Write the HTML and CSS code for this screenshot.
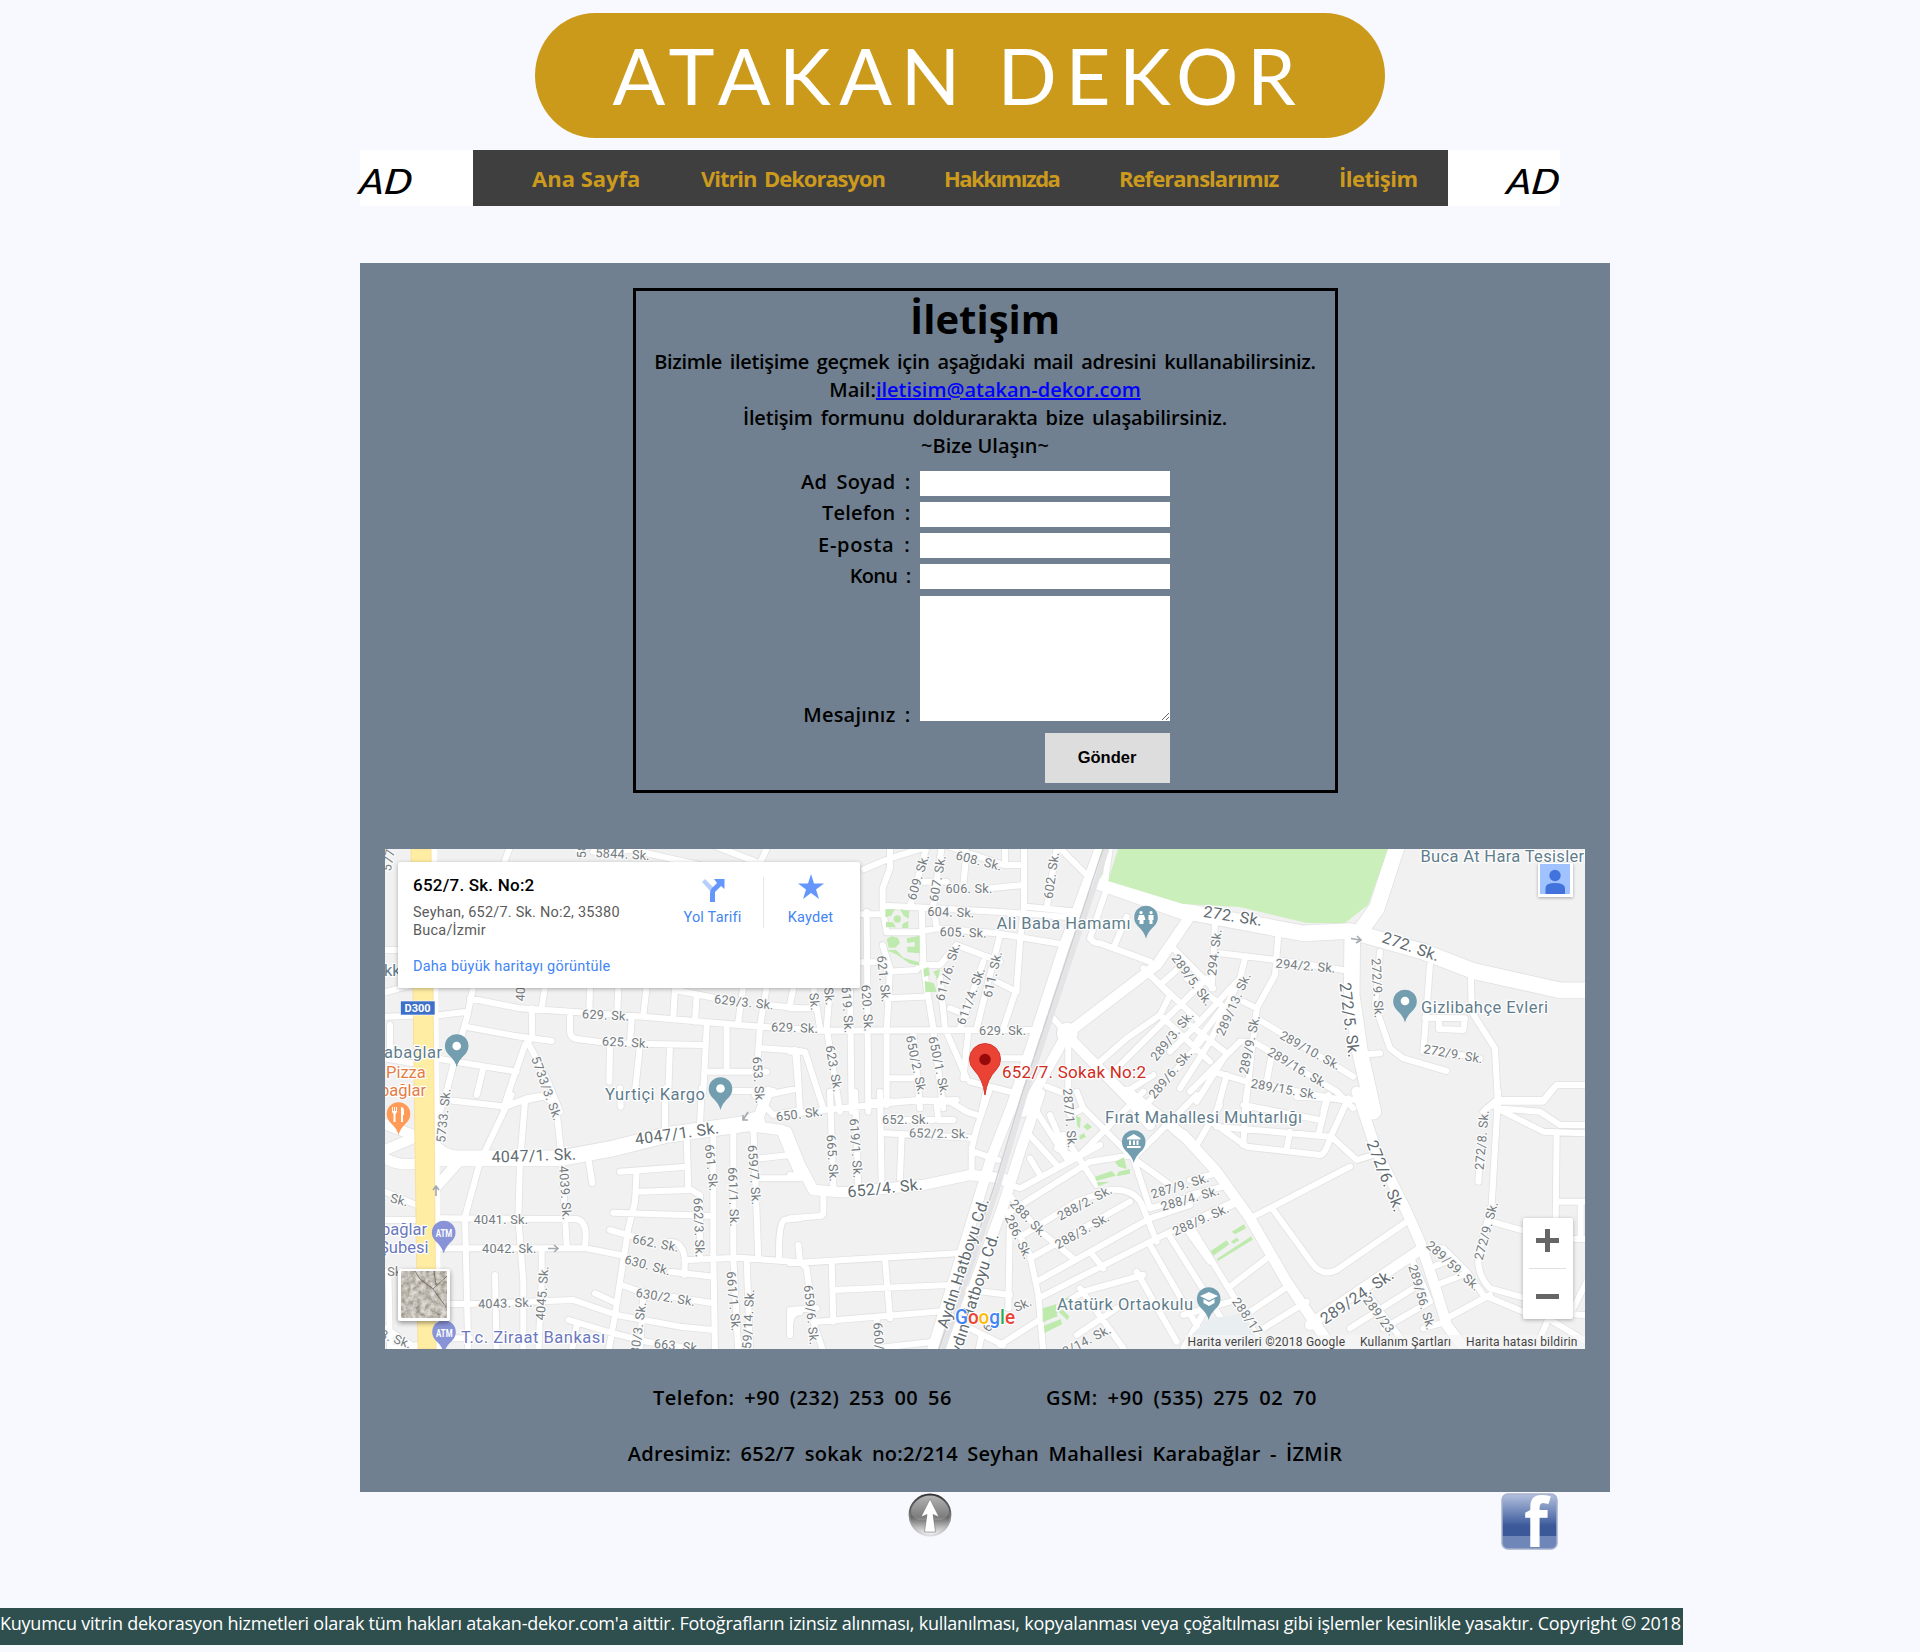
FILE: index.html
```html
<!DOCTYPE html>
<html lang="tr">
<head>
<meta charset="utf-8">
<title>İletişim - Atakan Dekor</title>
<link rel="stylesheet" href="styles.css">
</head>
<body>
<header class="banner"><h1 class="brand">ATAKAN DEKOR</h1></header>

<div class="topbar">
  <div class="mono"><span>AD</span></div>
  <nav class="menu">
    <a class="nav-home">Ana Sayfa</a>
    <a class="nav-decor">Vitrin Dekorasyon</a>
    <a class="nav-about">Hakkımızda</a>
    <a class="nav-refs">Referanslarımız</a>
    <a class="nav-contact">İletişim</a>
  </nav>
  <div class="mono mono-right"><span>AD</span></div>
</div>

<main class="content">
  <section class="contact">
    <h2 class="title">İletişim</h2>
    <p class="line intro">Bizimle iletişime geçmek için aşağıdaki mail adresini kullanabilirsiniz.</p>
    <p class="line mail">Mail:<a href="mailto:iletisim@atakan-dekor.com">iletisim@atakan-dekor.com</a></p>
    <p class="line hint">İletişim formunu doldurarakta bize ulaşabilirsiniz.</p>
    <p class="line reach">~Bize Ulaşın~</p>
    <form class="form">
      <label for="ad">Ad Soyad :</label><input id="ad" type="text">
      <label for="tel">Telefon :</label><input id="tel" type="text">
      <label for="mail" class="wide">E-posta :</label><input id="mail" type="text">
      <label for="konu" class="tight">Konu :</label><input id="konu" type="text">
      <label for="mesaj" class="last">Mesajınız :</label><textarea id="mesaj"></textarea>
      <button type="button">Gönder</button>
    </form>
  </section>

  <section class="map">
    <svg class="canvas" viewBox="385 849 1200 500" width="1200" height="500">
      <defs>
        <g id="roads">
          <g transform="translate(380 845) scale(.33333)">
            <path class="r" d="M392 0L370 60M155 0V60M620 0L600 30M640 20L760 15L890 45L960 60M1010 5L1140 55L1165 0M15 315H60M15 442L95 420M15 515L100 512M165 512L262 500M270 460L420 490L790 515L1140 545L1260 553M280 425L260 520L225 640L205 720L180 800M255 545L400 572L515 588M455 490L457 575L435 600L400 700L370 790M445 595L500 700L540 800M495 425L485 490M630 425L628 500M715 425L712 500M800 425L790 510M885 425L880 515M950 450L945 530M885 435L1020 462M1090 425L1075 530M1160 425L1140 545L1130 690M1160 480L1260 490M1240 430L1230 480M570 515V560Q572 580 590 582L690 595L970 600M690 600L688 710M780 600L765 740M870 600L865 740M980 545L970 740M755 520L750 590M1040 545V680M975 680H1160M1150 610L1260 618M1245 615L1255 730L1160 750M165 640L300 662L410 680M310 670L290 750M375 780L490 755L530 780M15 640L100 655M30 540V620M1060 738H1180"/>
          </g>
          <g transform="translate(380 1095) scale(.33333)">
            <path class="b" d="M165 190H540L700 160L860 120L1130 82"/>
            <path class="m" d="M165 150Q200 190 290 190M165 280L245 190M15 190Q60 215 110 205M15 165L110 125M15 88L100 120M1130 82L1165 -10M1125 95L1205 105L1235 180L1262 240"/>
            <path class="r" d="M395 0L300 200L255 365M200 15L380 35L440 10L500 0M435 20L420 200L415 370L430 560V770M530 50L545 190L560 450M625 190L637 265M165 370L590 372Q625 380 615 450M165 460H620L720 480M255 365L265 770M345 540L350 770M485 460V560L475 770M200 627H265L580 615L710 660L900 695L1000 705M645 595L710 625M565 675L700 715L800 740L930 760M590 690L575 770M720 230L920 215M770 230L765 320L745 400L720 560L705 660L685 770M780 290L925 285M920 130L925 280L960 300V480M700 353L1000 363M690 405L760 425M1000 120V480L1005 770M1060 105V490L1075 770M1120 95L1135 490M1100 490L1110 770M920 495L1075 488L1260 502M870 530L1000 545M870 440Q925 440 912 540M725 570L780 590L1000 625M790 590L780 770M1260 370L1215 374Q1195 380 1197 490M1260 652Q1225 650 1230 720M1140 250H1260M1140 190L1230 180M720 -20L722 35M855 -20V100M965 -20L960 90M1125 1L1180 60L1260 45M15 290L110 330M15 375H110M15 530H60M25 530L30 760L120 750M165 730H270M15 700L110 760"/>
            <circle class="r" cx="1125" cy="82" r="22"/>
          </g>
          <g transform="translate(790 845) scale(.33333)">
            <path class="b" d="M910 105L1200 207"/>
            <path class="m" d="M1205 207L1100 360L832 565L700 800M932 5L820 310L660 800M840 580L1020 765L1080 840"/>
            <path class="r" d="M222 73L300 40L412 5M300 0V70L278 130V200M215 208H280M280 182L380 187L620 200L860 218M410 5L360 185M455 5L430 180L440 250M530 20L520 120M702 0V190L690 290L680 430L640 550M480 5L640 60H700M645 0V60M390 110H470M600 130L700 120M380 262L440 250L620 265L830 300M800 10L770 190M710 185L860 200M810 10L890 90M278 190L290 262L380 262M395 190L400 350L380 375L290 380M400 360H450L500 300L630 350M290 460L400 455M278 300L300 370L290 560M215 352H270M400 350L410 430L430 550M450 400L465 550L530 700M0 490H80M0 552L80 557L750 555M580 350L510 550M630 270L560 550M620 410L680 440M480 490L530 510M70 425L90 550M120 425L110 550L150 800M180 425L185 800M230 200L235 800M290 560V780M0 620H45L100 790M20 620L30 800M370 560L390 790M430 560L460 790M300 700H390M240 772L500 765M535 560L520 700M540 710L680 745M630 640H730M588 740L575 800M960 5L945 110M950 130L900 280Q910 295 930 295L1080 350M1010 215L970 310M1060 370L1140 450L1110 510L1010 580L930 650M1150 310L1270 430M1110 510L1260 650M1110 420L1160 375M1080 390L1230 530M835 590V800M960 690L1250 400M1240 580L1060 790M770 725L835 750M780 510L830 565M1010 740L1090 690"/>
            <circle class="m" cx="832" cy="565" r="16"/>
          </g>
          <g transform="translate(1190 845) scale(.33333)">
            <path class="b" d="M-10 200L150 230L340 265L480 258L700 320L850 378L1110 436H1190M622 0L560 190L510 260M487 260L485 450L510 620L550 800"/>
            <path class="r" d="M75 235L65 430M90 325L260 345L460 375M265 270L255 390L200 490L165 800M165 340L150 400L60 590L-30 730M40 570L110 625M-10 400L100 485L20 590M200 520L490 695M150 590H190L440 740L490 790M110 625L20 770M70 680L170 710L480 770M245 630L230 710M0 740L150 590M150 400L20 540L-60 620M110 690L80 800M40 570L0 540M160 470L200 490M570 320L555 480L600 610L640 640L770 678M500 630L570 625M720 360L700 620M705 518L825 520L820 555L747 552V520M700 610L870 640M842 360L845 500L915 610L925 800M890 790L925 770H1060L1100 720H1190M410 760L400 800"/>
          </g>
          <g transform="translate(790 1095) scale(.33333)">
            <path class="m" d="M-10 110L30 210L70 285L160 292L400 270L540 240L640 250M680 -5L600 200L560 330L425 770M750 -5L690 170L640 330L480 770M1010 -10L1130 80L1200 140"/>
            <path class="r" d="M640 262L690 280L930 150M0 240L45 245M100 290V350Q100 362 90 363L0 370M120 -10L130 280M195 -10L205 280M270 -10L275 270M-20 60L100 45L250 30L380 15L480 20L530 50L560 60M597 -10L560 100L545 160V240M550 170L625 195M440 25L445 75H490M290 75H430M285 115L540 128M335 120L330 250M0 505L500 475M25 450L30 500L50 520L70 680L100 770M125 500L130 680M285 490L300 670M130 585L480 570M80 680L500 645M0 720V645L80 640M260 670V760L430 740M500 580L660 600M660 350L655 640M650 350L720 480L745 600L760 770M650 290L740 400L850 490M700 420L860 320L960 285Q1040 280 1060 340L1100 440M720 490L1020 320M740 560L1080 370L1200 330M660 350L900 200L1030 180M745 610L1100 430L1330 320M630 750L880 590L1060 540M720 190L750 240M710 110L800 210M740 50L830 190M780 60L830 180M820 120L920 270M860 -10L880 40L930 90L1030 190L1140 270M800 160L860 190L1060 -10M880 40L840 60M1030 190L1080 340L1220 300M1080 450L1260 760M1140 425L1300 680M900 470L940 520M1040 530L1160 740M870 580L1000 760M540 700L640 750M575 720L565 770M1030 190L1220 0M1180 760L1260 620M1180 390L1260 500M860 720L980 640"/>
          </g>
          <g transform="translate(1190 1095) scale(.33333)">
            <path class="m" d="M-20 120L80 230L180 370L290 560L420 750M500 -10L560 170L650 350L690 440L740 590L770 690L830 770M690 465L400 660L360 690"/>
            <path class="r" d="M480 215L190 365M250 345L370 510Q400 545 440 525L650 380M0 255L80 235M0 300L110 272M0 385L140 325M0 390L140 620L210 740M120 575L230 490M-20 660L120 620M180 650L300 570M220 700L350 620M170 -10L160 150M40 70L80 90L170 155L390 180Q405 180 420 130L475 10M160 30L390 75M80 95L420 125M300 110L290 160M415 0L385 120M320 5L510 15M430 130L500 195L550 180M20 150L90 30M690 460H760L830 530L880 600L1000 650L1190 660M660 480L720 620M720 520L780 495M740 570L830 535M770 670L900 600M480 700L670 580M580 700L720 620M520 580L640 740M700 700L770 680M925 -10L905 330L865 480Q860 540 900 580L1010 610M870 190L865 260M905 380L1010 410M880 50L920 15H1060L1090 -20M920 40L1050 50L1110 90H1190M940 50L1060 110L1190 115M1100 120L1097 380M1105 320H1190M1172 320V432M1140 432H1190M1190 560L1145 650M1080 660L1050 730M1090 680L1190 740"/>
          </g>
        </g>
        <g id="pin"><path d="M0 21Q-1.500 14.500 -8.500 8.200A11.800 11.800 0 1 1 8.500 8.200Q1.500 14.500 0 21Z"/></g>
      </defs>
      <rect x="385" y="849" width="1200" height="500" fill="#f1f1f1"/>
      <use href="#roads" class="casing"/>
      <use href="#roads" class="surface"/>
      <path fill="#caefbb" d="M1118 849H1388L1368 905L1345 923L1307 923L1240 907L1183 904L1108 881ZM1103 849H1108L1101 878L1096 877Z"/>
      <g fill="#bfeaad" transform="translate(790 845) scale(.33333)">
        <path d="M286 193H315L303 213L286 217ZM330 193L358 198L356 221L342 213ZM288 230L309 232L318 247H288ZM338 236L355 228V249H336ZM290 283L304 274L324 278L330 294L316 308H296ZM350 280L389 272V325L352 322V305H374V290L352 294ZM290 315L318 314L340 338L388 352V362L360 356L322 330ZM400 372L415 366L420 390L402 396ZM430 380L450 372L444 404ZM404 408L432 415L440 440L406 442Z"/>
        <circle cx="322" cy="222" r="11"/>
      </g>
      <g fill="#bfeaad" transform="translate(790 1095) scale(.33333)">
        <path d="M858 62L872 68L870 100L862 94ZM880 95L892 84L906 96L892 106ZM868 122L882 114L888 126L870 134ZM915 245L965 228L978 242L918 258ZM975 200L1002 187L1010 222L985 215ZM985 230L1020 222V236L980 244ZM920 262L960 260L925 274ZM758 640L798 628L802 664L758 682ZM762 692L812 672L816 688L764 714ZM806 650L818 644L838 664L832 676ZM824 612L836 606L840 624Z"/>
        <path d="M1262 468L1310 436L1318 448L1270 482ZM1325 410L1362 388L1368 400L1335 418ZM1280 492L1384 424L1388 434L1284 498ZM1322 440L1340 428L1348 436L1330 446Z"/>
      </g>
      <path fill="#e9eff1" d="M1192 1334L1208 1319L1245 1313L1262 1349H1190Z"/>
      <path class="rail" d="M1107 849L1025 1095L998 1187L943 1349"/>
      <path class="rail-line" d="M1103 849L1021 1097L994 1187L939 1349"/>
      <path fill="#fff" d="M431 849H437L439 1095L441 1349H434Z"/>
      <path fill="#ffeda3" stroke="#f9d98b" stroke-width=".7" d="M411 849H431L433 990L434 1095L436 1349H418L415 1150L413 990Z"/>
      <g stroke="#a4a9ad" stroke-width="1.6" fill="none"><path d="M1351 938.500L1360 940M1357 936L1361 940L1356 943M548 1248.500H557M554 1245L558 1248.500L554 1252M436 1196V1187M433 1190L436 1186L439 1190M748 1112L743 1120M743 1115V1120H748"/></g>

      <g class="st">
        <g transform="translate(380 845) scale(.33333)">
          <text transform="translate(25 45) rotate(-80)">577</text><text transform="translate(606 18) rotate(-90)">58</text><text transform="translate(728 27) rotate(3)">5844. Sk.</text>
          <text transform="translate(421 447) rotate(-88)">40</text><text transform="translate(1092 471) rotate(6)">629/3. Sk.</text><text transform="translate(677 510) rotate(3)">629. Sk.</text><text transform="translate(737 592) rotate(3)">625. Sk.</text><text transform="translate(1244 548) rotate(2)">629. Sk.</text>
          <text transform="translate(500 730) rotate(70)">5733/3. Sk.</text><text transform="translate(1136 706) rotate(86)">653. Sk.</text><text transform="translate(190 811) rotate(-84)">5733. Sk.</text>
        </g>
        <g transform="translate(380 1095) scale(.33333)">
          <text transform="translate(556 294) rotate(86)">4039. Sk.</text><text transform="translate(363 374)">4041. Sk.</text><text transform="translate(388 461)">4042. Sk.</text><text transform="translate(376 624) rotate(-2)">4043. Sk.</text><text transform="translate(486 594) rotate(-86)">4045. Sk.</text>
          <text transform="translate(995 218) rotate(84)">661. Sk.</text><text transform="translate(1061 306) rotate(88)">661/1. Sk.</text><text transform="translate(1123 240) rotate(86)">659/7. Sk.</text><text transform="translate(957 398) rotate(88)">662/3. Sk.</text>
          <text transform="translate(827 444) rotate(11)">662. Sk.</text><text transform="translate(803 510) rotate(15)">630. Sk.</text><text transform="translate(857 606) rotate(9)">630/2. Sk.</text><text transform="translate(773 710) rotate(-82)">630/3. Sk.</text><text transform="translate(892 752) rotate(6)">663. Sk.</text><text transform="translate(1061 619) rotate(85)">661/1. Sk.</text><text transform="translate(1104 683) rotate(-87)">659/14. Sk.</text><text transform="translate(1258 57) rotate(-7)">650. Sk.</text><text transform="translate(48 312) rotate(14)">. Sk.</text><text transform="translate(38 531)">. Sk.</text><text transform="translate(48 732) rotate(20)">3. Sk.</text>
        </g>
        <g transform="translate(790 845) scale(.33333)">
          <text transform="translate(384 96) rotate(-73)">609. Sk.</text><text transform="translate(442 100) rotate(-80)">607. Sk.</text><text transform="translate(567 47) rotate(14)">608. Sk.</text><text transform="translate(537 131)">606. Sk.</text><text transform="translate(483 201) rotate(2)">604. Sk.</text><text transform="translate(520 262) rotate(2)">605. Sk.</text><text transform="translate(784 91) rotate(-82)">602. Sk.</text>
          <text transform="translate(282 402) rotate(84)">621. Sk.</text><text transform="translate(473 380) rotate(-74)">611/6. Sk.</text><text transform="translate(542 453) rotate(-70)">611/4. Sk.</text><text transform="translate(607 388) rotate(-77)">611. Sk.</text><text transform="translate(74 470) rotate(84)">Sk.</text><text transform="translate(118 454) rotate(84)">Sk.</text><text transform="translate(173 494) rotate(86)">619. Sk.</text><text transform="translate(232 490) rotate(86)">620. Sk.</text><text transform="translate(638 557)">629. Sk.</text>
          <text transform="translate(132 671) rotate(80)">623. Sk.</text><text transform="translate(379 660) rotate(78)">650/2. Sk.</text><text transform="translate(447 663) rotate(78)">650/1. Sk.</text><text transform="translate(1207 405) rotate(54)">289/5. Sk.</text><text transform="translate(1146 572) rotate(-51)">289/3. Sk.</text><text transform="translate(1141 686) rotate(-50)">289/6. Sk.</text><text transform="translate(840 820) rotate(85)">287/1. Sk.</text>
        </g>
        <g transform="translate(1190 845) scale(.33333)">
          <text transform="translate(73 322) rotate(-83)">294. Sk.</text><text transform="translate(347 362) rotate(5)">294/2. Sk.</text><text transform="translate(130 477) rotate(-66)">289/13. Sk.</text><text transform="translate(178 598) rotate(-78)">289/9. Sk.</text><text transform="translate(361 616) rotate(29)">289/10. Sk.</text><text transform="translate(323 668) rotate(31)">289/16. Sk.</text><text transform="translate(283 732) rotate(10)">289/15. Sk.</text><text transform="translate(563 430) rotate(87)">272/9. Sk.</text><text transform="translate(790 626) rotate(10)">272/9. Sk.</text>
        </g>
        <g transform="translate(790 1095) scale(.33333)">
          <text transform="translate(128 190) rotate(86)">665. Sk.</text><text transform="translate(198 160) rotate(86)">619/1. Sk.</text><text transform="translate(347 75)">652. Sk.</text><text transform="translate(447 115) rotate(1)">652/2. Sk.</text><text transform="translate(716 370) rotate(46)">288. Sk.</text><text transform="translate(686 426) rotate(65)">286. Sk.</text><text transform="translate(884 323) rotate(-28)">288/2. Sk.</text><text transform="translate(876 407) rotate(-29)">288/3. Sk.</text><text transform="translate(1170 272) rotate(-17)">287/9. Sk.</text><text transform="translate(1200 310) rotate(-16)">288/4. Sk.</text><text transform="translate(1232 374) rotate(-24)">288/9. Sk.</text><text transform="translate(64 660) rotate(84)">659/6. Sk.</text><text transform="translate(267 740) rotate(86)">660/1.</text><text transform="translate(890 736) rotate(-27)">8/14. Sk.</text><text transform="translate(698 628) rotate(-24)">Sk.</text><text transform="translate(592 697) rotate(-60)">6</text>
        </g>
        <g transform="translate(1190 1095) scale(.33333)">
          <text transform="translate(875 135) rotate(-85)">272/8. Sk.</text><text transform="translate(888 407) rotate(-75)">272/9. Sk.</text><text transform="translate(790 512) rotate(42)">289/59. Sk.</text><text transform="translate(696 607) rotate(74)">289/56. Sk.</text><text transform="translate(570 663) rotate(53)">289/23.</text><text transform="translate(172 664) rotate(55)">288/17</text>
        </g>
      </g>
      <g class="mt">
        <text transform="translate(534 1155.500) rotate(-2)">4047/1. Sk.</text><text transform="translate(677 1133.500) rotate(-8)">4047/1. Sk.</text><text transform="translate(885 1188) rotate(-6)">652/4. Sk.</text>
        <text transform="translate(1233 916) rotate(9)">272. Sk.</text><text transform="translate(1411 946.500) rotate(19)">272. Sk.</text><text transform="translate(1349.500 1020) rotate(83)">272/5. Sk.</text><text transform="translate(1385.500 1176) rotate(68)">272/6. Sk.</text><text transform="translate(1357 1296.500) rotate(-34)">289/24. Sk.</text>
        <text transform="translate(963 1263) rotate(-72)">Aydın Hatboyu Cd.</text><text transform="translate(973 1298) rotate(-72)">Aydın Hatboyu Cd.</text>
      </g>
      <g class="poi" transform="translate(0 5.500)">
        <text x="605" y="1094" textLength="100">Yurtiçi Kargo</text><text x="996.500" y="923" textLength="134">Ali Baba Hamamı</text><text x="1421" y="1007" textLength="127">Gizlibahçe Evleri</text><text x="1420.500" y="856" textLength="168">Buca At Hara Tesisleri</text><text x="1105" y="1117" textLength="197">Fırat Mahallesi Muhtarlığı</text><text x="1057" y="1304" textLength="136">Atatürk Ortaokulu</text><text x="384" y="1052" textLength="58">abağlar</text><text x="384" y="970">kk</text>
        <g class="food"><text x="386" y="1072">Pizza</text><text x="380" y="1090">bağlar</text></g>
        <g class="bank"><text x="381" y="1229.500">bağlar</text><text x="379" y="1247">Şubesi</text><text x="461" y="1337" textLength="144">T.c. Ziraat Bankası</text></g>
        <text class="here" x="1002" y="1072" textLength="144">652/7. Sokak No:2</text>
      </g>
      <g fill="#739eb0">
        <use href="#pin" x="456.700" y="1046"/><use href="#pin" x="720.500" y="1089"/><use href="#pin" x="1146" y="917.500"/><use href="#pin" x="1405" y="1001.500"/><use href="#pin" x="1133.700" y="1142"/><use href="#pin" x="1208.700" y="1299"/>
      </g>
      <use href="#pin" x="398.500" y="1114" fill="#ff9b57"/>
      <g fill="#8994d8"><use href="#pin" x="443.700" y="1232.500"/><use href="#pin" x="444" y="1332"/></g>
      <g fill="#fff">
        <circle cx="456.700" cy="1046" r="4.300"/><circle cx="720.500" cy="1088.500" r="4.300"/><circle cx="1405" cy="1001" r="4.300"/>
        <path d="M1141 911a1.600 1.600 0 1 0 .1 0ZM1139 915H1144L1145.500 920H1143.500V924H1139.500V920H1137.500ZM1151 911a1.600 1.600 0 1 0 .1 0ZM1148.500 915H1153.500V920H1152.500V924H1149.500V920H1148.500Z"/>
        <path d="M1127 1138L1133.700 1134L1140.500 1138V1139.500H1127ZM1129 1140.500H1131V1145H1129ZM1133 1140.500H1135V1145H1133ZM1136.500 1140.500H1138.500V1145H1136.500ZM1127 1146H1140.500V1148H1127Z"/>
        <path d="M1200 1296L1209 1292L1218 1296L1209 1300.500ZM1203.500 1299L1209 1302L1214.500 1299V1303L1209 1306L1203.500 1303Z"/>
        <path d="M392 1107H393V1111H394V1107H395V1111H396V1107H397V1112L395.500 1114V1122H393.500V1114L392 1112ZM401 1107Q404 1107 404 1111V1115H403V1122H401Z"/>
        <text class="atm" x="435.700" y="1237" textLength="16.500" lengthAdjust="spacingAndGlyphs">ATM</text><text class="atm" x="436" y="1336.500" textLength="16.500" lengthAdjust="spacingAndGlyphs">ATM</text>
      </g>
      <path fill="#ea4335" stroke="#d5382c" d="M985 1095Q983 1079 974 1070A15.500 15.500 0 1 1 996 1070Q987 1079 985 1095Z"/><circle cx="985" cy="1059.500" r="5.700" fill="#960a0a"/>
      <rect x="400.500" y="1001" width="34.500" height="14" fill="#3d70c9" stroke="#fff" stroke-width=".6"/><text class="shield" x="404.500" y="1012" textLength="26">D300</text>
      <text class="google" x="955" y="1324" textLength="60" lengthAdjust="spacingAndGlyphs"><tspan fill="#4285f4">G</tspan><tspan fill="#ea4335">o</tspan><tspan fill="#fbbc05">o</tspan><tspan fill="#4285f4">g</tspan><tspan fill="#34a853">l</tspan><tspan fill="#ea4335">e</tspan></text>
      <rect x="1185" y="1335" width="400" height="14" fill="#f5f5f5" opacity=".7"/>
      <g class="legal"><text x="1187.500" y="1346" textLength="157.500">Harita verileri ©2018 Google</text><text x="1360" y="1346" textLength="91">Kullanım Şartları</text><text x="1466" y="1346" textLength="111.500">Harita hatası bildirin</text></g>
    </svg>

    <div class="card">
      <div class="place">
        <strong>652/7. Sk. No:2</strong>
        <span>Seyhan, 652/7. Sk. No:2, 35380<br>Buca/İzmir</span>
        <a>Daha büyük haritayı görüntüle</a>
      </div>
      <div class="action directions">
        <svg width="24" height="24" viewBox="0 0 24 24"><path d="M1 4L4 1L13 10L10 14Z" fill="#b9cffb"/><path d="M9 24V15Q9 12 11 10L16 5L13 1H23.500V11L20 8L14 14V24Z" fill="#6596fb"/></svg>
        Yol Tarifi
      </div>
      <div class="action save">
        <svg width="26" height="26" viewBox="0 0 26 26"><path d="M13 0L16 9.500H26L18 15.500L21 25L13 19L5 25L8 15.500L0 9.500H10Z" fill="#6596fb"/></svg>
        Kaydet
      </div>
    </div>
    <div class="user"><svg width="30" height="30" viewBox="0 0 30 30"><rect width="30" height="30" fill="#a0c3ff"/><circle cx="15" cy="11.500" r="5.700" fill="#4272db"/><path d="M5.500 30V24Q5.500 19 15 19T25 24V30Z" fill="#4272db"/></svg></div>
    <div class="zoom"><svg width="50" height="101" viewBox="0 0 50 101"><path d="M13 22.500H36M24.500 11V34M13 78.500H36" stroke="#666" stroke-width="5"/><path d="M6 50.500H43" stroke="#e0e0e0"/></svg></div>
    <div class="satellite"><svg width="46" height="47" viewBox="0 0 46 47">
      <filter id="terrain" x="0" y="0" width="1" height="1"><feTurbulence type="fractalNoise" baseFrequency=".2" numOctaves="3" seed="4"/><feColorMatrix values=".7 .35 0 0 .02 .7 .35 0 0 -.01 .7 .35 0 0 -.06 0 0 0 0 1"/></filter>
      <rect width="46" height="47" filter="url(#terrain)"/><path d="M14 0L19 8L32 18L46 5M32 18L45 36M35 14L33 0" stroke="#5d5148" fill="none" opacity=".65"/></svg></div>
  </section>

  <section class="numbers">
    <p class="line phones"><span class="phone">Telefon: +90 (232) 253 00 56</span><span class="gsm">GSM: +90 (535) 275 02 70</span></p>
    <p class="line address">Adresimiz: 652/7 sokak no:2/214 Seyhan Mahallesi Karabağlar - İZMİR</p>
  </section>
</main>

<div class="links">
  <svg width="44" height="44" viewBox="0 0 44 44">
    <defs><linearGradient id="ball" x2="0" y2="1"><stop stop-color="#aaa"/><stop offset=".55" stop-color="#666"/><stop offset=".8" stop-color="#bbb"/><stop offset="1" stop-color="#f8f8ff"/></linearGradient>
    <linearGradient id="rim" x2="0" y2="1"><stop stop-color="#111"/><stop offset=".5" stop-color="#777"/><stop offset="1" stop-color="#ddd"/></linearGradient></defs>
    <circle cx="22" cy="22" r="20.500" fill="url(#ball)" stroke="url(#rim)" stroke-width="1.800"/>
    <path d="M3 17A19 19 0 0 1 41 17Q41 25 33 27H11Q3 25 3 17Z" fill="#fff" opacity=".15"/>
    <path d="M22 6L31 24L25 21.500L27.500 39H16.500L19 21.500L13 24Z" fill="#fff" stroke="#666" stroke-width=".5"/>
  </svg>
  <svg class="fb" width="57" height="57" viewBox="0 0 57 57">
    <defs><linearGradient id="fbg" x2="0" y2="1"><stop stop-color="#b4c1de"/><stop offset=".5" stop-color="#4c68a5"/><stop offset=".58" stop-color="#3b5998"/><stop offset=".76" stop-color="#3b5998"/><stop offset=".77" stop-color="#6f87b8"/><stop offset="1" stop-color="#6f87b8"/></linearGradient></defs>
    <rect x="1" y="1" width="55" height="55" rx="6" fill="url(#fbg)" stroke="#a5b0cc" stroke-width="1.500"/>
    <text x="23" y="54" class="fb-letter" textLength="24" lengthAdjust="spacingAndGlyphs">f</text>
  </svg>
</div>

<footer class="footer">Kuyumcu vitrin dekorasyon hizmetleri olarak tüm hakları atakan-dekor.com'a aittir. Fotoğrafların izinsiz alınması, kullanılması, kopyalanması veya çoğaltılması gibi işlemler kesinlikle yasaktır. Copyright © 2018</footer>
</body>
</html>
```
FILE: styles.css
```css
* { box-sizing: border-box; }
body {
  margin: 0;
  height: 1652px;
  background: #f8f8ff;
  color: #000;
  font-family: "Comic Sans MS", "Open Sans", sans-serif;
  font-size: 20px;
  font-weight: 600;
  overflow: hidden;
}
p, h1, h2 { margin: 0; }

.banner { width: 850px; height: 125px; margin: 13px auto 12px; border-radius: 60px / 62.5px; background: #cc9a1b; text-align: center; }
.brand { color: #fff; font: 400 78px/125px Lato, sans-serif; letter-spacing: 8.6px; padding-right: 3px; white-space: nowrap; }

.topbar { width: 1200px; height: 56px; margin: 0 auto; display: flex; background: #fff; }
.mono { width: 113px; font: italic 500 35px/60px Lato, sans-serif; }
.mono span { display: inline-block; transform: skewX(-8deg) scaleX(1.12); transform-origin: left; }
.mono-right { width: 112px; text-align: right; }
.mono-right span { transform-origin: right; }
.menu { width: 975px; display: flex; gap: 60px; padding-left: 59px; background: #3f3f3f; color: #cc9a1c; font-size: 22px; line-height: 57px; font-weight: 700; white-space: nowrap; }
.nav-home { width: 109px; }
.nav-decor { width: 183px; letter-spacing: -1.05px; word-spacing: 3px; }
.nav-about { width: 115px; letter-spacing: -1.5px; }
.nav-refs { width: 160px; letter-spacing: -.95px; }
.nav-contact { letter-spacing: -.5px; }

.content { width: 1250px; height: 1229px; margin: 57px 0 0 360px; padding: 25px; background: #708090; }
.contact { width: 705px; height: 505px; margin: 0 auto 56px; border: 3px solid #000; text-align: center; }
.title { font-size: 40px; line-height: 56px; font-weight: 700; padding-bottom: 1px; }
.line { line-height: 28px; white-space: nowrap; text-align: center; }
.intro { letter-spacing: -.34px; word-spacing: 3px; }
.hint { letter-spacing: -.17px; word-spacing: 3px; }
.contact a { color: #00f; }

.form { margin: 11px 0 0 0; padding-right: 165px; display: grid; grid-template-columns: 1fr 250px; gap: 6px 9px; grid-template-rows: 25px 25px 25px 25px 126px; }
.form label { text-align: right; line-height: 22px; white-space: nowrap; word-spacing: 4px; letter-spacing: .2px; }
.form .wide { letter-spacing: .7px; line-height: 23px; }
.form .tight { letter-spacing: -.7px; line-height: 23px; }
.form .last { align-self: end; line-height: 13px; }
.form input { width: 250px; height: 25px; border: 0; padding: 0; background: #fff; }
.form textarea { width: 250px; height: 125px; margin-top: 1px; border: 0; padding: 0; background: #fff; display: block; }
.form button { grid-column: 2; justify-self: end; width: 125px; height: 50px; margin-top: 6px; padding-bottom: 3px; border: 0; background: #ddd; color: #000; font: 700 16.5px "Liberation Sans", Arial, sans-serif; }

.map { position: relative; width: 1200px; height: 500px; overflow: hidden; font-family: Roboto, sans-serif; font-weight: 400; }
.canvas { display: block; }
.casing { --extra: 5px; stroke: #e2e2e2; }
.surface { --extra: 0px; stroke: #fff; }
#roads { fill: none; stroke-linecap: round; stroke-linejoin: round; }
.r { stroke-width: calc(18px + var(--extra)); }
.m { stroke-width: calc(31px + var(--extra)); }
.b { stroke-width: calc(47px + var(--extra)); }
.rail { fill: none; stroke: #e4e4e6; stroke-width: 5px; }
.rail-line { fill: none; stroke: #d0d0d4; stroke-width: 1.5px; }
.canvas text { paint-order: stroke; stroke-linejoin: round; }
.st text { font-size: 38px; letter-spacing: .8px; text-anchor: middle; dominant-baseline: central; fill: #747b7f; stroke: #fafafa; stroke-width: 8px; }
.mt text { font-size: 16px; letter-spacing: .3px; text-anchor: middle; dominant-baseline: central; fill: #616b70; stroke: #fff; stroke-width: 2.5px; }
.poi text { font-size: 16.5px; fill: #5f7d8c; stroke: #fff; stroke-width: 2.5px; }
.poi .food text { fill: #e57c45; }
.poi .bank text { fill: #6b78bd; }
.poi .here { fill: #d02c22; font-size: 17px; }
.canvas .atm { font-size: 11px; font-weight: 700; }
.canvas .shield { font-size: 11px; font-weight: 700; fill: #fff; }
.canvas .google { font-size: 21px; font-weight: 500; stroke: #fff; stroke-width: 2px; }
.legal text { font-size: 12px; fill: #444; }

.card { position: absolute; left: 13px; top: 13px; width: 462px; height: 126px; display: flex; border-radius: 2px; background: #fff; box-shadow: 0 1px 4px rgba(0, 0, 0, .3); }
.place { width: 264px; padding: 13px 0 0 15px; display: flex; flex-direction: column; white-space: nowrap; font-size: 14.5px; letter-spacing: .22px; line-height: 18px; color: #5b5b5b; }
.place strong { font-size: 17px; line-height: 20px; font-weight: 500; color: #000; margin-bottom: 9px; }
.place a { margin-top: 18px; color: #4285f4; }
.action { display: flex; flex-direction: column; align-items: center; color: #4285f4; font-size: 14.5px; letter-spacing: .2px; line-height: 18px; }
.directions { width: 102px; height: 51px; margin-top: 15px; padding-top: 1px; gap: 7px; border-right: 1px solid #e8e8e8; }
.save { width: 93px; padding-top: 12px; gap: 9px; }
.user { position: absolute; left: 1153px; top: 14px; width: 35px; height: 34px; padding: 1px 2px; background: #fff; box-shadow: 0 1px 3px rgba(0, 0, 0, .3); }
.zoom { position: absolute; left: 1138px; top: 369px; width: 50px; height: 101px; border-radius: 2px; background: #fff; box-shadow: 0 1px 4px rgba(0, 0, 0, .3); }
.satellite { position: absolute; left: 13px; top: 420px; width: 52px; height: 52px; padding: 2px 3px; border-radius: 2px; background: #fff; box-shadow: 0 2px 5px rgba(0, 0, 0, .4); }
.user svg, .zoom svg, .satellite svg { display: block; }

.numbers { margin-top: 35px; }
.phones { display: flex; padding-left: 268px; margin-bottom: 28px; word-spacing: 4px; letter-spacing: .5px; }
.phone { width: 393px; text-align: left; }
.gsm { letter-spacing: .6px; }
.address { word-spacing: 4px; letter-spacing: .25px; }

.links { width: 1200px; height: 116px; margin: 0 auto; padding: 1px 2px 0 548px; display: flex; justify-content: space-between; }
.fb-letter { font: 700 68px "Open Sans", sans-serif; fill: #fff; }
.footer { width: 1683px; height: 37px; background: #2f4f4f; color: #fff; font-size: 18px; line-height: 31px; font-weight: 400; letter-spacing: -.235px; white-space: nowrap; }
```
